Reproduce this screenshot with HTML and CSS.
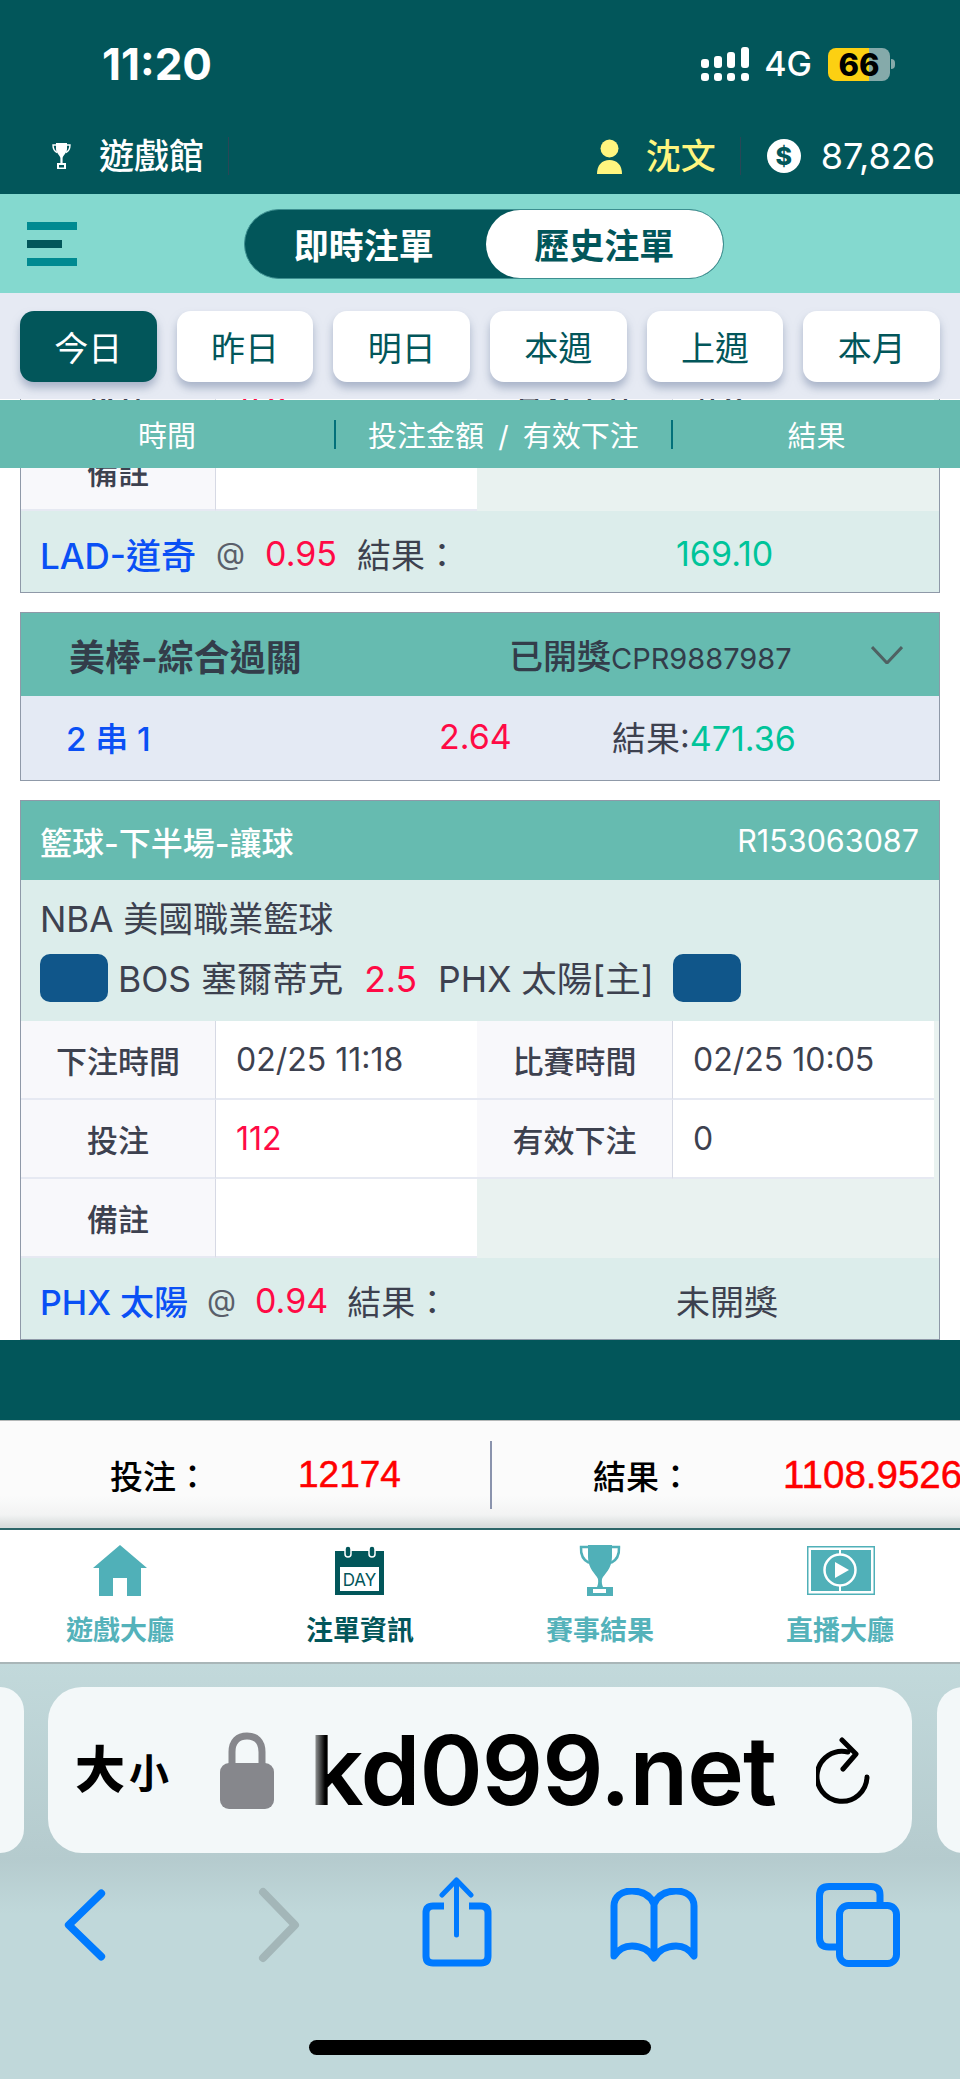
FILE: index.html
```html
<!DOCTYPE html>
<html lang="zh-Hant">
<head>
<meta charset="utf-8">
<title>歷史注單</title>
<link rel="stylesheet" href="styles.css">
</head>
<body>
<div class="page">
  <header class="header">
    <div class="status">
      <div class="clock">11:20</div>
      <div class="status-right">
        <svg class="signal" viewBox="0 0 48 34"><g fill="#fff"><rect x="0" y="12" width="8" height="9" rx="3"/><rect x="13" y="9" width="8" height="12" rx="3"/><rect x="26" y="5" width="8" height="16" rx="3"/><rect x="40" y="0" width="8" height="21" rx="3"/><rect x="0" y="26" width="8" height="8" rx="3"/><rect x="13" y="26" width="8" height="8" rx="3"/><rect x="26" y="26" width="8" height="8" rx="3"/><rect x="40" y="26" width="8" height="8" rx="3"/></g></svg>
        <span class="net">4G</span>
        <div class="battery">66</div>
        <div class="nub"></div>
      </div>
    </div>
    <div class="topbar">
      <svg class="cup" viewBox="0 0 19 26"><path fill="#fff" d="M4 0H15V6C15 10 11 12 10.600 15V20H14V26H5V20H8.400V15C8 12 4 10 4 6Z"/><path fill="none" stroke="#fff" stroke-width="1.400" d="M4 2H1C1 6 2 8 5 9.500M15 2H18C18 6 17 8 14 9.500"/><rect x="7" y="22" width="5" height="2.500" fill="#02565a"/></svg>
      <span class="venue">遊戲館</span>
      <i class="vsep"></i>
      <div class="account">
        <svg class="user" viewBox="0 0 25 35"><circle cx="12.500" cy="9.500" r="9" fill="#fff57f"/><path fill="#fff57f" d="M0 35C0 26 5 21 12.500 21S25 26 25 35Z"/></svg>
        <span class="name">沈文</span>
        <i class="vsep"></i>
        <span class="coin">$</span>
        <span class="money">87,826</span>
      </div>
    </div>
  </header>

  <section class="modebar">
    <div class="burger"><i class="b1"></i><i class="b2"></i><i class="b1"></i></div>
    <div class="pill">
      <div class="pill-item">即時注單</div>
      <div class="pill-item on">歷史注單</div>
    </div>
  </section>

  <nav class="dates">
    <div class="date on">今日</div>
    <div class="date">昨日</div>
    <div class="date">明日</div>
    <div class="date">本週</div>
    <div class="date">上週</div>
    <div class="date">本月</div>
  </nav>

  <div class="columns">
    <div class="col c1">時間</div>
    <i class="csep"></i>
    <div class="col c2">投注金額 / 有效下注</div>
    <i class="csep"></i>
    <div class="col c3">結果</div>
  </div>

  <main class="content">
    <article class="card first">
      <div class="info">
        <div class="lab">投注</div><div class="val red">178</div><div class="lab">有效下注</div><div class="val">178</div>
        <div class="lab">備註</div><div class="val"></div>
      </div>
      <div class="foot">
        <span class="team">LAD-道奇</span><span class="at">@</span><span class="red">0.95</span><span>結果：</span><span class="result green">169.10</span>
      </div>
    </article>

    <article class="card second">
      <div class="head-a">
        <span class="title">美棒-綜合過關</span>
        <span class="state">已開獎<small>CPR9887987</small></span>
        <svg class="chev" viewBox="0 0 32 18"><path d="M1 1L16 17L31 1" fill="none" stroke="#4f6162" stroke-width="3"/></svg>
      </div>
      <div class="parlay">
        <span class="p-a team">2 串 1</span>
        <span class="p-b red">2.64</span>
        <span class="p-c">結果:<b class="green">471.36</b></span>
      </div>
    </article>

    <article class="card third">
      <div class="head-b"><span>籃球-下半場-讓球</span><span>R153063087</span></div>
      <div class="league">
        <div>NBA 美國職業籃球</div>
        <div class="match">
          <i class="flag"></i>
          <span>BOS 塞爾蒂克</span>
          <span class="red">2.5</span>
          <span>PHX 太陽[主]</span>
          <i class="flag"></i>
        </div>
      </div>
      <div class="info">
        <div class="lab">下注時間</div><div class="val">02/25 11:18</div><div class="lab">比賽時間</div><div class="val">02/25 10:05</div>
        <div class="lab">投注</div><div class="val red">112</div><div class="lab">有效下注</div><div class="val">0</div>
        <div class="lab">備註</div><div class="val"></div>
      </div>
      <div class="foot">
        <span class="team">PHX 太陽</span><span class="at">@</span><span class="red">0.94</span><span>結果：</span><span class="result">未開獎</span>
      </div>
    </article>
  </main>

  <div class="spacer"></div>

  <section class="summary">
    <div class="sum left"><span class="sum-label">投注：</span><span class="sum-val">12174</span></div>
    <i class="sum-sep"></i>
    <div class="sum right"><span class="sum-label">結果：</span><span class="sum-val">1108.9526</span></div>
  </section>

  <nav class="tabbar">
    <div class="tab">
      <svg viewBox="0 0 80 56"><path fill="#50b0b8" d="M40 1L67 24H61V52H47V34H33V52H19V24H13Z"/></svg>
      <span>遊戲大廳</span>
    </div>
    <div class="tab on">
      <svg viewBox="0 0 80 56"><rect x="15" y="7" width="49" height="44" fill="#02565a"/><rect x="20" y="23" width="39" height="24" fill="#fff"/><rect x="25" y="2" width="6" height="11" rx="3" fill="#02565a" stroke="#fff" stroke-width="1.500"/><rect x="49" y="2" width="6" height="11" rx="3" fill="#02565a" stroke="#fff" stroke-width="1.500"/><text x="39.500" y="42" text-anchor="middle" class="day">DAY</text></svg>
      <span>注單資訊</span>
    </div>
    <div class="tab">
      <svg viewBox="0 0 80 56"><path fill="#50b0b8" d="M28 1H52V13C52 25 44 30 42 35C41.500 38 42 41 43 43H37C38 41 38.500 38 38 35C36 30 28 25 28 13Z"/><path fill="#50b0b8" d="M27 43H53V52H27Z"/><rect x="33" y="45" width="13" height="4" fill="#fff"/><path fill="none" stroke="#50b0b8" stroke-width="2.500" d="M28 3H21C20.500 11 23 16 29 19M52 3H59C59.500 11 57 16 51 19"/></svg>
      <span>賽事結果</span>
    </div>
    <div class="tab">
      <svg viewBox="0 0 80 56"><rect x="7.750" y="2.750" width="66.500" height="47.500" fill="#fff" stroke="#50b0b8" stroke-width="1.500"/><rect x="11" y="6" width="60" height="41" fill="#50b0b8"/><path stroke="#fff" stroke-width="2" d="M40 6V10M40 42V47"/><circle cx="40" cy="26" r="15.500" fill="#50b0b8" stroke="#fff" stroke-width="2.500"/><path fill="#fff" d="M35 18V34L49 26Z"/></svg>
      <span>直播大廳</span>
    </div>
  </nav>

  <footer class="safari">
    <div class="url-row">
      <div class="peek peek-l"></div>
      <div class="url">
        <span class="aa"><b>大</b><small>小</small></span>
        <svg class="lock" viewBox="0 0 54 77"><path fill="none" stroke="#86878c" stroke-width="7" d="M12 36V20C12 9 18 4 27 4S42 9 42 20V36"/><rect x="0" y="31" width="54" height="46" rx="9" fill="#86878c"/></svg>
        <span class="domain">kd099.net</span>
        <svg class="reload" viewBox="0 0 54 67"><path fill="none" stroke="#000" stroke-width="5" stroke-linecap="round" stroke-linejoin="round" d="M32 15A25 25 0 1 0 51 40M26 3L40 17L27 32"/></svg>
      </div>
      <div class="peek peek-r"></div>
    </div>
    <div class="tools">
      <svg class="t-back" viewBox="0 0 48 76"><path fill="none" stroke="#007aff" stroke-width="8" stroke-linecap="round" stroke-linejoin="round" d="M41 5L7 38L41 71"/></svg>
      <svg class="t-fwd" viewBox="0 0 46 76"><path fill="none" stroke="#a3b6b8" stroke-width="8" stroke-linecap="round" stroke-linejoin="round" d="M7 5L39 38L7 71"/></svg>
      <svg class="t-share" viewBox="0 0 70 90"><path fill="none" stroke="#007aff" stroke-width="7" d="M22 29H11Q4 29 4 36V79Q4 86 11 86H59Q66 86 66 79V36Q66 29 59 29H47"/><path fill="none" stroke="#007aff" stroke-width="5" stroke-linecap="round" stroke-linejoin="round" d="M34.500 5V58M20 18L34.500 3L49 18"/></svg>
      <svg class="t-book" viewBox="0 0 88 74"><path fill="none" stroke="#007aff" stroke-width="7" stroke-linejoin="round" d="M44 16C40 7 32 3 22 3C11 3 4 9 4 18V68C8 62 14 58 22 58C32 58 40 63 44 70C48 63 56 58 66 58C74 58 80 62 84 68V18C84 9 77 3 66 3C56 3 48 7 44 16ZM44 16V68"/></svg>
      <svg class="t-tabs" viewBox="0 0 84 84"><path fill="none" stroke="#007aff" stroke-width="7" d="M64 19V12Q64 3.500 55 3.500H13Q3.500 3.500 3.500 13V55Q3.500 64 13 64H20"/><rect x="23.500" y="22.500" width="57" height="58" rx="9" fill="none" stroke="#007aff" stroke-width="7"/></svg>
    </div>
    <div class="home-bar"></div>
  </footer>
</div>
</body>
</html>
```
FILE: styles.css
```css
* { box-sizing: border-box; }
html, body { margin: 0; padding: 0; }
body {
  font-family: Inter, "Noto Sans CJK TC", sans-serif;
  color: #3d414f;
  background: #fff;
}
i { display: block; font-style: normal; }
svg { display: block; flex: none; }

.page { width: 960px; height: 2079px; overflow: hidden; display: flex; flex-direction: column; }

/* header */
.header { background: #02565a; height: 194px; color: #fff; flex: none; }
.status { height: 128px; display: flex; align-items: center; justify-content: space-between; padding: 0 65px 0 102px; }
.clock { font-size: 44px; font-weight: 700; line-height: 1; }
.status-right { display: flex; align-items: center; }
.signal { width: 48px; height: 34px; }
.net { font-size: 34px; font-weight: 500; margin-left: 15px; line-height: 1; }
.battery {
  width: 62px; height: 33px; margin-left: 16px; border-radius: 8px;
  background: linear-gradient(90deg, #fcd012 66%, #85aaaa 66%);
  color: #000; font-size: 31px; font-weight: 800; line-height: 33px; text-align: center;
}
.nub { width: 4px; height: 10px; margin-left: 1px; background: #85aaaa; border-radius: 0 4px 4px 0; }

.topbar { height: 56px; display: flex; align-items: center; padding: 0 25px 0 52px; }
.cup { width: 19px; height: 26px; }
.venue { font-size: 35px; font-weight: 500; margin-left: 28px; line-height: 1; }
.vsep { width: 1px; height: 38px; background: #2a4656; margin-left: 24px; }
.account { display: flex; align-items: center; margin-left: auto; }
.user { width: 25px; height: 35px; }
.name { font-size: 35px; font-weight: 500; color: #fff57f; margin-left: 24px; line-height: 1; }
.account .vsep { margin-left: 24px; }
.coin {
  width: 34px; height: 34px; border-radius: 50%; margin-left: 26px;
  background: #fff; color: #02565a; font-size: 25px; font-weight: 800; line-height: 34px; text-align: center;
}
.money { font-size: 36px; margin-left: 20px; line-height: 1; }

/* mode switch */
.modebar { background: #84d9cf; height: 99px; display: flex; align-items: center; padding-left: 27px; flex: none; }
.burger { width: 50px; margin-right: 167px; display: flex; flex-direction: column; gap: 10px; }
.b1 { width: 50px; height: 8px; background: #008a91; }
.b2 { width: 35px; height: 8px; background: #02565a; }
.pill { width: 480px; height: 70px; border-radius: 35px; background: #02565a; border: 1px solid #3d8f90; display: flex; font-size: 35px; }
.pill-item { flex: 1; color: #fff; display: flex; align-items: center; justify-content: center; font-weight: 600; padding-right: 3px; }
.pill-item.on { background: #fff; color: #02565a; border-radius: 34px; padding-right: 0; }

/* date strip */
.dates { position: relative; z-index: 3; background: #e6eaf3; height: 106px; padding: 18px 20px 0; display: flex; gap: 20px; flex: none; }
.date {
  flex: 1; height: 71px; border-radius: 14px; background: #fff; color: #02565a;
  font-size: 34px; display: flex; align-items: center; justify-content: center;
  box-shadow: 0 6px 8px rgba(118, 134, 165, 0.55);
}
.date.on { background: #02565a; color: #fff; }

/* column band */
.columns {
  position: relative; z-index: 2; height: 68px; margin-top: 1px; background: #66bbb0;
  display: flex; align-items: center; color: #fff; font-size: 29px; word-spacing: 6px; flex: none;
}
.col { text-align: center; }
.c1 { width: 334px; }
.c2 { width: 335px; }
.c3 { flex: 1; }
.csep { width: 2px; height: 29px; background: #02707a; }

/* cards */
.content { margin-top: -69px; height: 941px; overflow: hidden; background: #fff; flex: none; }
.card { margin: 0 20px; border: 1px solid #8f99a8; }
.card.first { margin-top: -46px; border-top: 0; }
.card.second { margin-top: 19px; }
.card.third { margin-top: 19px; }

.info { display: grid; grid-template-columns: 195px 261px 196px 261px; grid-auto-rows: 79px; background: #e9f2f0; font-size: 32px; }
.lab { background: #f8f8fb; border-right: 1px solid #d6d9e4; border-bottom: 2px solid #e6e9f2; display: flex; align-items: center; justify-content: center; font-size: 31px; font-weight: 500; }
.val { background: #fff; border-bottom: 2px solid #e6e9f2; display: flex; align-items: center; padding-left: 20px; }

.foot { height: 81px; padding: 3px 0 0 19px; background: #dcedeb; display: flex; align-items: center; gap: 20px; font-size: 34px; white-space: nowrap; }
.third .foot { gap: 19px; }
.team { color: #0a50f5; font-size: 35px; font-weight: 500; }
.third .team { font-size: 34px; }
.at { font-size: 30px; color: #5a5f6a; }
.result { margin-left: auto; width: 263px; }
.red { color: #ff0a45; }
.green { color: #00c49a; font-weight: 400; }

.head-a { height: 83px; background: #66bbb0; display: flex; align-items: center; padding-left: 48px; color: #333d4a; font-size: 34px; font-weight: 500; white-space: nowrap; }
.title { width: 440px; font-size: 36px; font-weight: 600; }
.state small { font-size: 29px; font-weight: 400; }
.chev { width: 32px; height: 18px; margin-left: 79px; }
.parlay { height: 84px; padding-bottom: 3px; background: #e4eaf4; display: flex; align-items: center; font-size: 34px; white-space: nowrap; }
.p-a { width: 418px; padding-left: 45px; font-size: 33px; }
.p-b { width: 173px; }
.head-b { height: 79px; background: #66bbb0; color: #fff; display: flex; align-items: center; justify-content: space-between; padding: 0 20px 0 19px; font-size: 32px; font-weight: 500; }
.head-b span:last-child { font-size: 30.500px; font-weight: 400; }
.league { height: 141px; background: #dcedeb; padding: 16px 0 0 19px; font-size: 35px; line-height: 46px; }
.match { display: flex; align-items: center; gap: 21px; margin-top: 12px; height: 48px; font-size: 35.5px; white-space: nowrap; }
.match span { padding-top: 3px; }
.match .flag:first-child { margin-right: -11px; }
.match .flag:last-child { margin-left: -2px; }
.flag { width: 68px; height: 48px; border-radius: 10px; background: #10568a; flex: none; }

.spacer { height: 80px; background: #02565a; flex: none; }

/* totals */
.summary {
  height: 110px; flex: none; display: flex; align-items: center; color: #000; white-space: nowrap;
  background: linear-gradient(#fbfbfb 70%, #f2f3f3 88%, #d8dcdc 98%);
  border-top: 1px solid #b4b8b8; border-bottom: 2px solid #2c6568;
}
.sum { display: flex; align-items: center; overflow: hidden; }
.sum.left { width: 490px; padding-left: 110px; }
.sum.right { flex: 1; padding-left: 101px; height: 60px; }
.sum-sep { width: 2px; height: 68px; background: #8a93ad; }
.sum-label { font-size: 33px; font-weight: 500; width: 188px; flex: none; }
.sum.right .sum-label { width: 190px; }
.sum-val { color: #ff0000; font-family: "Liberation Sans", "Noto Sans CJK TC", sans-serif; font-size: 37px; -webkit-text-stroke: 0.5px #ff0000; }
.sum.right .sum-val { font-size: 38.5px; }

/* bottom nav */
.tabbar { height: 134px; flex: none; background: #fff; display: grid; grid-template-columns: repeat(4, 1fr); border-bottom: 2px solid #a9b6b8; }
.tab { display: flex; flex-direction: column; align-items: center; padding-top: 14px; color: #54b2ba; font-size: 27px; font-weight: 700; }
.tab svg { width: 80px; height: 56px; }
.tab span { margin-top: 15px; line-height: 32px; }
.tab.on { color: #02565a; }
.day { font-family: Inter, sans-serif; font-size: 17px; font-weight: 400; fill: #02565a; }

/* browser chrome */
.safari { flex: 1; background: linear-gradient(#c2d9db 0, #b5cbce 195px, #c0d8da 250px); padding-top: 23px; }
.url-row { display: flex; height: 166px; gap: 24px; overflow: hidden; }
.peek { width: 40px; flex: none; background: #f3f8f9; }
.peek-l { width: 24px; border-radius: 0 26px 26px 0; }
.peek-r { border-radius: 26px 0 0 26px; margin-left: 1px; }
.url { width: 864px; flex: none; border-radius: 34px; background: #f3f8f9; display: flex; align-items: center; padding-left: 27px; color: #000; }
.aa { display: flex; align-items: baseline; width: 96px; flex: none; font-weight: 700; line-height: 1; }
.aa b { font-size: 50px; }
.aa small { font-size: 40px; margin-left: 4px; }
.lock { width: 54px; height: 77px; margin-left: 49px; }
.domain { position: relative; font-size: 96px; font-weight: 600; line-height: 1; margin-left: 35px; letter-spacing: -1px; white-space: nowrap; }
.domain::before { content: ""; position: absolute; left: -2px; top: 0; width: 18px; height: 100%; background: linear-gradient(90deg, #f3f8f9 10%, rgba(243, 248, 249, 0)); }
.reload { width: 54px; height: 67px; margin-left: auto; margin-right: 42px; }

.tools { display: flex; height: 90px; margin-top: 24px; padding-left: 62px; }
.t-back { width: 46px; height: 76px; margin-top: 10px; }
.t-fwd { width: 46px; height: 76px; margin: 10px 0 0 148px; }
.t-share { width: 70px; height: 90px; margin-left: 120px; }
.t-book { width: 88px; height: 74px; margin: 11px 0 0 118px; }
.t-tabs { width: 84px; height: 84px; margin: 6px 0 0 118px; }
.home-bar { width: 342px; height: 15px; border-radius: 8px; background: #000; margin: 73px auto 0; }
```
